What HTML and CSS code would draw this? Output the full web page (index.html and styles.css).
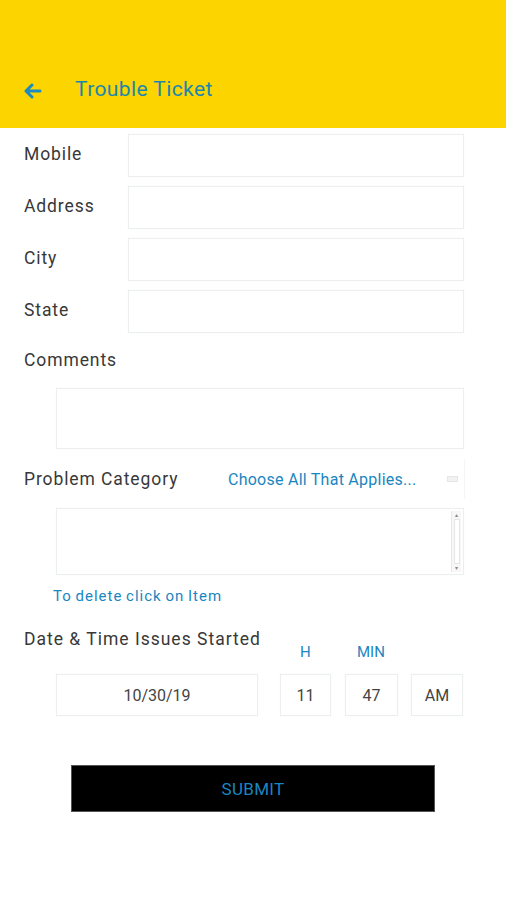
FILE: index.html
```html
<!DOCTYPE html>
<html>
<head>
<meta charset="utf-8">
<link rel="stylesheet" href="styles.css">
</head>
<body>
<header class="appbar">
  <svg class="back" width="18" height="16" viewBox="0 0 18 16"><path d="M8 2 L2 8 L8 14 M2 8 H16" fill="none" stroke="#1a8cc0" stroke-width="3" stroke-linecap="round" stroke-linejoin="round"/></svg>
  <span class="title">Trouble Ticket</span>
</header>
<main class="form">
  <div class="row"><span class="label">Mobile</span><div class="box field"></div></div>
  <div class="row"><span class="label">Address</span><div class="box field"></div></div>
  <div class="row"><span class="label">City</span><div class="box field"></div></div>
  <div class="row"><span class="label">State</span><div class="box field"></div></div>
  <div class="label comments-label">Comments</div>
  <div class="box comments"></div>
  <div class="cat-row">
    <span class="label">Problem Category</span>
    <div class="picker"><span class="choose">Choose All That Applies...</span><span class="mini"></span></div>
  </div>
  <div class="box listbox"><div class="scroll"><span class="sarrow">&#9652;</span><span class="strack"></span><span class="sarrow">&#9662;</span></div></div>
  <div class="hint">To delete click on Item</div>
  <div class="dt-row">
    <span class="label">Date &amp; Time Issues Started</span>
  </div>
  <div class="time-heads"><span class="h">H</span><span class="m">MIN</span></div>
  <div class="time-row">
    <div class="box tbox date">10/30/19</div>
    <div class="box tbox hour">11</div>
    <div class="box tbox min">47</div>
    <div class="box tbox ampm">AM</div>
  </div>
  <div class="submit-wrap"><button class="submit">SUBMIT</button></div>
</main>
</body>
</html>
```
FILE: styles.css
```css
* { box-sizing: border-box; }
body { margin: 0; background: #fff; font-family: Roboto, "Liberation Sans", sans-serif; width: 506px; height: 900px; overflow: hidden; }
.appbar { height: 128px; background: #fcd400; display: flex; align-items: flex-end; padding: 0 0 27px 24px; }
.back { margin-bottom: 2px; }
.title { margin-left: 33px; font-size: 21px; color: #1a86b0; letter-spacing: 0.4px; line-height: 24px; }
.form { padding: 6px 0 0 0; }
.box { border: 1px solid #eceff0; background: #fff; box-shadow: 0 0 1px rgba(0,0,0,0.05); }
.row { display: flex; align-items: center; height: 43px; margin-bottom: 9px; }
.label { font-size: 17.5px; color: #383838; letter-spacing: 0.9px; }
.row .label { padding-left: 24px; width: 128px; margin-top: -4px; }
.field { width: 336px; height: 43px; }
.comments-label { padding-left: 24px; margin-top: 17px; line-height: 20px; }
.comments { margin: 18px 0 0 56px; width: 408px; height: 61px; }
.cat-row { display: flex; align-items: center; height: 40px; margin-top: 10px; }
.cat-row .label { padding-left: 24px; width: 224px; }
.picker { width: 240px; height: 40px; display: flex; align-items: center; box-shadow: 1px 0 1px rgba(0,0,0,0.04); }
.choose { font-size: 16px; color: #1a86c0; padding-left: 4px; flex: 1; letter-spacing: 0.25px; }
.mini { width: 11px; height: 6px; background: #f2f2f2; border: 1px solid #e6e6e6; margin-right: 6px; }
.listbox { margin: 9px 0 0 56px; width: 408px; height: 67px; position: relative; display: flex; justify-content: flex-end; }
.scroll { width: 10px; margin: 2px 2px 2px 0; display: flex; flex-direction: column; align-items: center; background: #f7f7f7; border-left: 1px solid #e8e8e8; }
.sarrow { font-size: 6px; color: #888; line-height: 8px; }
.strack { flex: 1; width: 6px; border: 1px solid #e6e6e6; background: #fff; }
.hint { padding-left: 53px; margin-top: 12px; font-size: 15px; color: #1a86c0; letter-spacing: 1px; word-spacing: -1px; line-height: 18px; }
.dt-row { padding-left: 24px; margin-top: 24px; line-height: 20px; }
.dt-row .label { letter-spacing: 1px; }
.time-heads { position: relative; height: 18px; margin-top: -7px; font-size: 15px; color: #1a86c0; }
.time-heads .h { position: absolute; left: 300px; }
.time-heads .m { position: absolute; left: 357px; }
.time-row { display: flex; margin: 13px 0 0 56px; height: 42px; }
.tbox { display: flex; align-items: center; justify-content: center; font-size: 16px; color: #444; height: 42px; }
.date { width: 202px; }
.hour { width: 51px; margin-left: 22px; }
.min { width: 53px; margin-left: 14px; }
.ampm { width: 52px; margin-left: 13px; }
.submit-wrap { padding-left: 71px; margin-top: 49px; }
.submit { width: 364px; height: 47px; background: #000; border: 1px solid #555; color: #1a86c0; font-family: Roboto, "Liberation Sans", sans-serif; font-size: 17px; letter-spacing: 0.3px; }
```
